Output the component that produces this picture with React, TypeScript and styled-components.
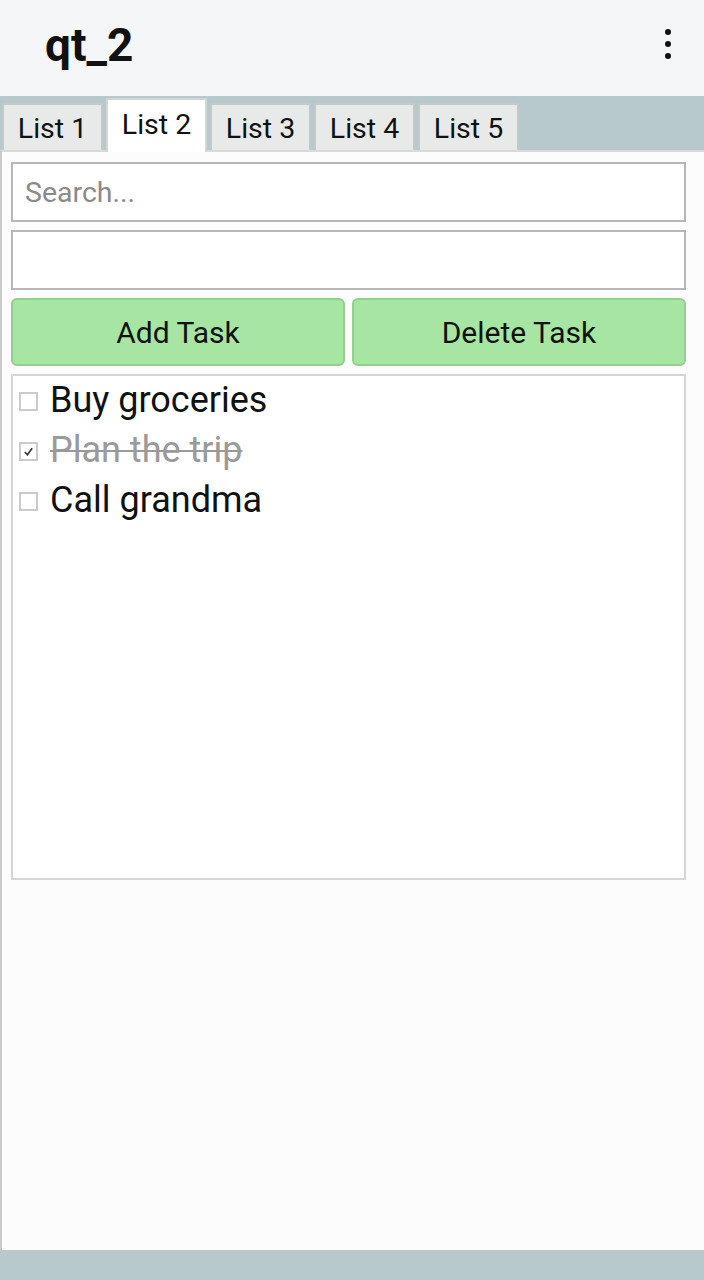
import React, { useState } from "react";
import styled, { createGlobalStyle } from "styled-components";

const Global = createGlobalStyle`
  html, body { margin: 0; padding: 0; }
  body { font-family: Roboto, "Noto Sans", Arial, sans-serif; background: #fcfcfc; }
  * { box-sizing: border-box; }
`;

const Screen = styled.div`
  width: 704px;
  height: 1280px;
  display: flex;
  flex-direction: column;
  overflow: hidden;
`;

const Header = styled.header`
  height: 96px;
  flex: 0 0 96px;
  background: #f5f6f8;
  display: flex;
  align-items: center;
  justify-content: space-between;
  padding: 0 27px 0 45px;
`;

const Title = styled.h1`
  margin: 0;
  font-family: Roboto, Arial, sans-serif;
  font-weight: 700;
  font-size: 46px;
  color: #111;
  margin-top: -6px;
`;

const Kebab = styled.div`
  display: flex;
  flex-direction: column;
  gap: 6px;
  padding: 4px 6px;
  margin-top: -8px;
`;

const Dot = styled.span`
  width: 6px;
  height: 6px;
  border-radius: 50%;
  background: #111;
`;

const TabBar = styled.nav`
  height: 54px;
  flex: 0 0 54px;
  background: #b7c9cc;
  display: flex;
  align-items: flex-end;
  gap: 3px;
  padding-left: 2px;
`;

const Tab = styled.button<{ $active?: boolean }>`
  width: 101px;
  height: ${(p) => (p.$active ? 54 : 47)}px;
  margin-bottom: ${(p) => (p.$active ? -2 : 0)}px;
  position: relative;
  z-index: ${(p) => (p.$active ? 2 : 1)};
  background: ${(p) => (p.$active ? "#ffffff" : "#e8e9e9")};
  border: 2px solid ${(p) => (p.$active ? "#d4d4d4" : "#c4c8c9")};
  border-bottom: none;
  border-radius: 2px 2px 0 0;
  font-family: Roboto, Arial, sans-serif;
  font-size: 28.5px;
  color: #111;
  padding: ${(p) => (p.$active ? "0 0 4px" : "2px 0 0")};
  cursor: pointer;
`;

const Content = styled.main`
  flex: 1;
  background: #fcfcfc;
  border-left: 2px solid #c9c9c9;
  border-top: 2px solid #d9d9d9;
  padding: 10px 18px 0 9px;
  display: flex;
  flex-direction: column;
  gap: 8px;
`;

const Field = styled.input`
  height: 60px;
  width: 100%;
  border: 2px solid #b7b7b7;
  background: #fff;
  font-family: Roboto, Arial, sans-serif;
  font-size: 28.5px;
  padding: 0 12px;
  color: #222;
  outline: none;
  &::placeholder { color: #8a8a8a; }
`;

const ButtonRow = styled.div`
  display: grid;
  grid-template-columns: 1fr 1fr;
  gap: 7px;
`;

const ActionButton = styled.button`
  height: 68px;
  background: #a6e6a2;
  border: 2px solid #92d08e;
  border-radius: 6px;
  font-family: Roboto, Arial, sans-serif;
  font-size: 30px;
  color: #111;
  cursor: pointer;
`;

const TaskList = styled.ul`
  list-style: none;
  margin: 0;
  padding: 0 0 0 6px;
  height: 506px;
  border: 2px solid #d6d6d6;
  background: #fff;
`;

const TaskRow = styled.li`
  height: 50px;
  display: flex;
  align-items: center;
  gap: 12px;
`;

const Box = styled.span`
  width: 19px;
  height: 19px;
  flex: 0 0 19px;
  border: 2px solid #cbcbcb;
  background: #fff;
  display: flex;
  align-items: center;
  justify-content: center;
`;

const TaskText = styled.span<{ $done?: boolean }>`
  font-family: Roboto, Arial, sans-serif;
  font-size: 36px;
  line-height: 40px;
  color: ${(p) => (p.$done ? "#9a9a9a" : "#111")};
  text-decoration: ${(p) => (p.$done ? "line-through" : "none")};
  text-decoration-thickness: 2px;
  margin-top: -2px;
`;

const Footer = styled.footer`
  height: 30px;
  flex: 0 0 30px;
  background: #b7c9cc;
  border-top: 2px solid #c2c6c7;
`;

const tasks = [
  { text: "Buy groceries", done: false },
  { text: "Plan the trip", done: true },
  { text: "Call grandma", done: false },
];

export default function App() {
  const [active, setActive] = useState(1);
  return (
    <>
      <Global />
      <Screen>
        <Header>
          <Title>qt_2</Title>
          <Kebab>
            <Dot />
            <Dot />
            <Dot />
          </Kebab>
        </Header>
        <TabBar>
          {["List 1", "List 2", "List 3", "List 4", "List 5"].map((t, i) => (
            <Tab key={t} $active={i === active} onClick={() => setActive(i)}>
              {t}
            </Tab>
          ))}
        </TabBar>
        <Content>
          <Field placeholder="Search..." />
          <Field />
          <ButtonRow>
            <ActionButton>Add Task</ActionButton>
            <ActionButton>Delete Task</ActionButton>
          </ButtonRow>
          <TaskList>
            {tasks.map((t) => (
              <TaskRow key={t.text}>
                <Box>
                  {t.done && (
                    <svg width="11" height="11" viewBox="0 0 12 12">
                      <path d="M2 6.5 L4.8 9.5 L10 2.5" fill="none" stroke="#333" strokeWidth="1.8" />
                    </svg>
                  )}
                </Box>
                <TaskText $done={t.done}>{t.text}</TaskText>
              </TaskRow>
            ))}
          </TaskList>
        </Content>
        <Footer />
      </Screen>
    </>
  );
}
